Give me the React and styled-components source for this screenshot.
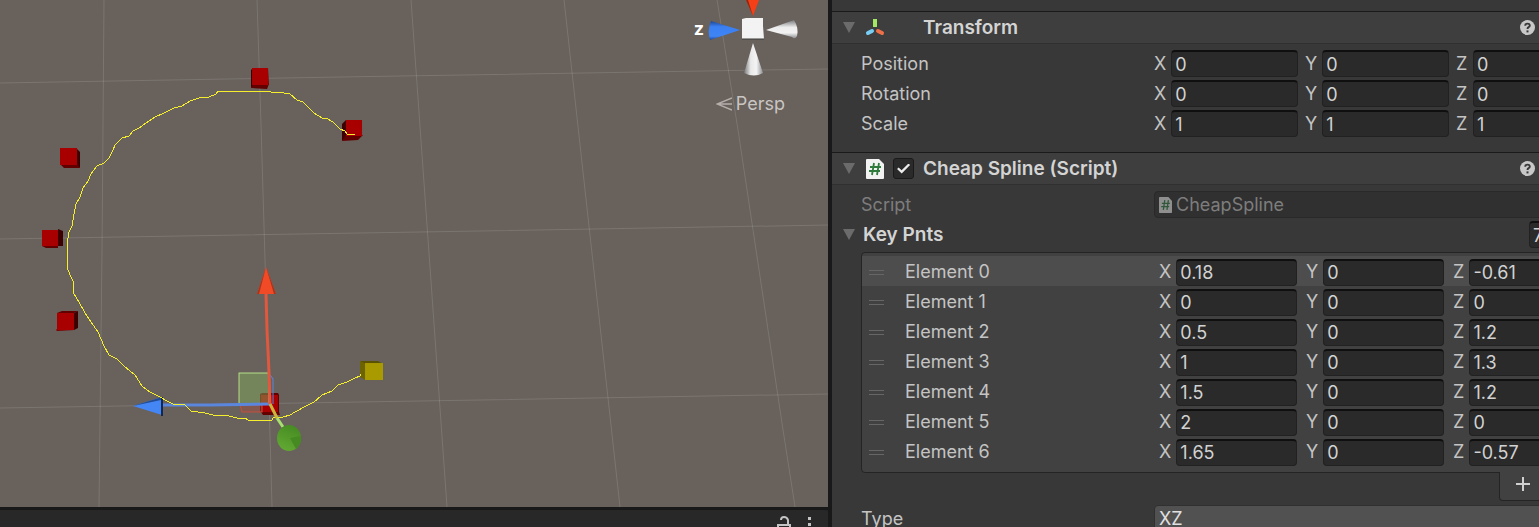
import React from "react";
import styled, { createGlobalStyle } from "styled-components";

const GlobalStyle = createGlobalStyle`
  *, *::before, *::after { box-sizing: border-box; }
  body {
    margin: 0;
    background: #191919;
    color: #c4c4c4;
    font-family: Inter, "Liberation Sans", sans-serif;
    font-size: 18px;
    line-height: 26px;
  }
  button, input, select { font: inherit; color: inherit; }
`;

const Editor = styled.div`
  display: grid;
  grid-template-columns: 54fr 46fr;
  height: 100vh;
  overflow: hidden;
`;

const LeftColumn = styled.div`
  display: flex;
  flex-direction: column;
  min-width: 0;
  min-height: 0;
  border-right: 3px solid #191919;
`;

const SceneView = styled.main`
  position: relative;
  flex: 1;
  min-height: 0;
  overflow: hidden;
  background: #68615c;
`;

const SceneDrawing = styled.svg`
  display: block;
  width: 100%;
  height: 100%;
`;

const Gizmo = styled.div`
  position: absolute;
  top: 0;
  right: 28px;
  width: 108px;
  display: flex;
  flex-direction: column;
  align-items: flex-end;
`;

const GizmoRow = styled.div`
  display: flex;
  align-items: flex-start;
`;

const AxisLabel = styled.span`
  padding-top: 16px;
  margin-right: 4px;
  font-size: 18px;
  font-weight: 700;
  color: #ffffff;
`;

const PerspButton = styled.button`
  display: flex;
  align-items: center;
  gap: 4px;
  margin: 11px 15px 0 0;
  padding: 0;
  border: 0;
  background: none;
  color: #c9c5c3;
`;

const TabStrip = styled.div`
  flex: 0 0 20px;
  display: flex;
  justify-content: flex-end;
  align-items: flex-start;
  gap: 17px;
  padding: 6px 16px 0 0;
  overflow: hidden;
  background: #282828;
  border-top: 3px solid #191919;
  border-top-right-radius: 4px;
`;

const IconButton = styled.button`
  display: flex;
  padding: 0;
  border: 0;
  background: none;
`;

const Inspector = styled.aside`
  min-width: 0;
  overflow: hidden;
  background: #383838;
  border-left: 1px solid #191919;
  padding-top: 11px;
`;

const Header = styled.header`
  display: flex;
  align-items: center;
  height: 33px;
  padding: 0 4px 0 11px;
  background: #3e3e3e;
  border-top: 1px solid #1a1a1a;
  border-bottom: 1px solid #303030;
`;

const IconSlot = styled.span`
  display: flex;
  flex: 0 0 ${(p) => p.$width}px;
`;

const Title = styled.h2`
  flex: 1;
  margin: 0;
  font-size: 19px;
  font-weight: 600;
  color: #d4d4d4;
`;

const CheckBox = styled.input`
  appearance: none;
  width: 21px;
  height: 21px;
  margin: 0 9px 0 0;
  border: 1px solid #1a1a1a;
  border-radius: 3px;
  background: #2a2a2a;
  display: grid;
  place-content: center;
  &:checked::before {
    content: "";
    width: 13px;
    height: 10px;
    background: #ececec;
    clip-path: polygon(0 55%, 12% 40%, 35% 68%, 88% 0, 100% 14%, 36% 100%);
  }
`;

const Body = styled.section`
  display: flex;
  flex-direction: column;
  gap: 3px;
  padding: 6px 0 15px 29px;
`;

const Row = styled.div`
  display: flex;
  align-items: center;
  height: 27px;
`;

const RowLabel = styled.label`
  flex: 0 0 293px;
  color: ${(p) => (p.$dim ? "#7d7d7d" : "#c4c4c4")};
`;

const Vector = styled.div`
  display: grid;
  grid-template-columns: repeat(3, ${(p) => (p.$compact ? 138 : 144)}px);
  gap: ${(p) => (p.$compact ? 9 : 7)}px;
`;

const Axis = styled.label`
  display: flex;
  align-items: center;
  gap: 5px;
`;

const AxisName = styled.span`
  flex: 0 0 ${(p) => (p.$compact ? 10 : 12)}px;
`;

const Field = styled.input`
  flex: 1;
  min-width: 0;
  height: 27px;
  padding: 0 3px;
  border: 1px solid #212121;
  border-top: 2px solid #0f0f0f;
  border-radius: 4px;
  background: #2a2a2a;
  color: #d2d2d2;
  outline: none;
`;

const ObjectField = styled.div`
  flex: 1;
  display: flex;
  align-items: center;
  gap: 4px;
  height: 27px;
  margin-right: -8px;
  padding-left: 4px;
  border: 1px solid #292929;
  border-radius: 4px;
  background: #303030;
  color: #7d7d7d;
`;

const Foldout = styled.button`
  display: flex;
  align-items: center;
  flex: 1;
  gap: 8px;
  margin-left: -18px;
  padding: 0;
  border: 0;
  background: none;
  font-size: 19px;
  font-weight: 600;
  color: #d4d4d4;
`;

const CountField = styled(Field)`
  flex: 0 0 60px;
  margin-right: -50px;
`;

const ElementList = styled.ul`
  margin: 1px -8px 0 0;
  padding: 3px 0 6px;
  list-style: none;
  background: #414141;
  border: 1px solid #242424;
  border-radius: 4px;
`;

const ElementRow = styled.li`
  display: flex;
  align-items: center;
  height: 30px;
  padding: 2px 0 0 7px;
  background: ${(p) => (p.$selected ? "#4d4d4d" : "transparent")};
`;

const Handle = styled.span`
  flex: 0 0 15px;
  height: 5px;
  margin-right: 21px;
  border: solid #666666;
  border-width: 1px 0;
`;

const ElementName = styled.span`
  flex: 0 0 254px;
`;

const ListFooter = styled.div`
  display: flex;
  justify-content: flex-end;
  height: 28px;
  margin: -4px -8px 2px 0;
`;

const AddButton = styled.button`
  display: grid;
  place-items: center;
  width: 48px;
  height: 29px;
  padding: 0 0 5px;
  border: 1px solid #242424;
  border-top: 0;
  border-radius: 0 0 4px 4px;
  background: #414141;
`;

const Select = styled.select`
  appearance: none;
  flex: 1;
  height: 27px;
  margin-right: -8px;
  padding: 0 4px;
  border: 1px solid #303030;
  border-radius: 4px;
  background: #515151;
  color: #e0e0e0;
`;

const Triangle = () => (
  <svg width="12" height="11" viewBox="0 0 12 11" aria-hidden="true">
    <path d="M0 0H12L6 11Z" fill="#6b6b6b" />
  </svg>
);

const TransformIcon = () => (
  <svg width="20" height="20" viewBox="0 0 20 20" fill="none" strokeWidth="4" aria-hidden="true">
    <path d="M10 1V9" stroke="#a3ea62" />
    <path d="M7 13L3 15" stroke="#78cdf5" strokeLinecap="round" />
    <path d="M13 13L17 15" stroke="#ee7048" strokeLinecap="round" />
  </svg>
);

const ScriptIcon = ({ dim }) => (
  <svg width={dim ? 13 : 18} height={dim ? 16 : 20} viewBox="0 0 18 20" preserveAspectRatio="none" aria-hidden="true">
    <path d="M1 0H13L18 5V19Q18 20 17 20H1Q0 20 0 19V1Q0 0 1 0Z" fill={dim ? "#8f8f8f" : "#f2f2f2"} />
    <path d="M8 4L6 16M13 4L11 16M4 8H15M3 12H14" stroke={dim ? "#31583a" : "#2f7a3d"} strokeWidth="1.8" fill="none" />
  </svg>
);

const HelpIcon = () => (
  <svg width="15" height="15" viewBox="0 0 15 15" aria-hidden="true">
    <circle cx="7.5" cy="7.5" r="7.5" fill="#c8c8c8" />
    <path d="M5.2 5.8Q5.2 3.6 7.5 3.6T9.8 5.6Q9.8 6.6 8.6 7.2Q7.5 7.8 7.5 9" fill="none" stroke="#383838" strokeWidth="1.9" />
    <rect x="6.5" y="10.4" width="2" height="2" fill="#383838" />
  </svg>
);

const Cube = ({ x, y, w, h, faces, top = "#a80000" }) => (
  <g>
    {faces.map(([points, fill]) => (
      <polygon key={points} points={points} fill={fill} />
    ))}
    <rect x={x} y={y} width={w} height={h} fill={top} />
  </g>
);

const cubes = [
  { x: 252, y: 68, w: 16, h: 17, faces: [["251,70 253,68 253,86 251,88", "#3c0000"], ["251,88 253,84 269,84 267,89", "#620000"], ["267,68 268,68 269,84 267,86", "#8a0000"]] },
  { x: 346, y: 120, w: 16, h: 16, faces: [["342,124 346,120 346,137 342,141", "#3c0000"], ["342,141 346,135 363,135 358,140", "#620000"]] },
  { x: 60, y: 148, w: 17, h: 17, faces: [["76,148 80,152 80,168 76,165", "#3c0000"], ["60,164 77,164 80,168 64,168", "#620000"]] },
  { x: 42, y: 230, w: 16, h: 16, faces: [["58,229 63,231 63,246 58,246", "#3c0000"], ["42,246 58,246 58,248 46,248", "#620000"]] },
  { x: 57, y: 313, w: 17, h: 17, faces: [["57,313 62,311 78,311 74,313", "#620000"], ["74,313 78,311 78,328 74,330", "#3c0000"], ["56,330 58,328 74,329 74,330 57,331", "#7a0000"]] },
  { x: 261, y: 395, w: 17, h: 17, faces: [["260,394 262,393 278,393 279,395 279,412 280,415 263,415 260,411", "#620000"]] },
  { x: 365, y: 363, w: 18, h: 17, top: "#a99a00", faces: [["360,361 378,361 383,364 365,365", "#5c5300"], ["360,361 366,364 366,380 360,377", "#6d6300"]] },
];

const curve =
  "355,134 347,134 345,131 340,129 333,122 326,118 322,118 314,113 306,105 303,102 297,100 290,94 284,93 271,92 270,91 218,91 216,94 209,97 199,98 190,101 182,106 174,108 164,113 155,117 146,123 139,128 133,131 129,136 122,138 115,145 113,150 109,158 104,163 97,166 91,174 88,181 83,188 80,197 76,204 74,214 72,226 69,232 68,238 67,250 67,267 70,275 73,281 73,292 79,302 85,313 91,322 98,332 104,346 109,355 117,359 124,366 135,375 142,386 150,392 160,397 167,401 173,404 185,405 191,411 205,413 213,415 229,416 237,418 245,418 248,420 272,420 273,418 283,417 290,415 295,412 306,406 314,402 322,395 332,391 338,385 347,382 355,378 360,376 360,374";

function Scene() {
  return (
    <SceneDrawing viewBox="0 0 828 507" preserveAspectRatio="xMinYMin slice" role="img" aria-label="Spline in the scene view">
      <g fill="none" stroke="#ffffff" strokeOpacity="0.13">
        <path d="M104 0L102 250L99 507M257 0L261 125L265 260L272 507M411 0L447 507M564 0L620 507M717 0L738 130L783 430L795 507" />
        <path d="M0 83L400 76L828 69M0 239L420 232L828 225M0 408L420 401L828 394" />
      </g>
      {cubes.map((c) => (
        <Cube key={`${c.x}-${c.y}`} {...c} />
      ))}
      <rect x="239" y="373" width="30" height="31" fill="#7fa85a" fillOpacity="0.5" stroke="#b4e088" />
      <path d="M240 405L242 412H262V405Z" fill="#b04a3c" fillOpacity="0.4" stroke="#c2513f" />
      <path d="M270 375L273 379V404" fill="none" stroke="#5b86dc" />
      <path d="M162 405L210 405L270 404" fill="none" stroke="#5a86de" strokeWidth="3" />
      <path d="M266 294L267 330L269 372L270 404" fill="none" stroke="#e0583e" strokeWidth="3" />
      <path d="M266 267L257 294H276Z" fill="#f04a26" />
      <path d="M266 267L257 294H259Z" fill="#a5351d" />
      <path d="M266 267L274 294H276Z" fill="#a5351d" />
      <path d="M133 406L162 397V415Z" fill="#4486f4" />
      <path d="M133 406L162 397L161 400Z" fill="#234b91" />
      <path d="M161 397H163V416H161Z" fill="#14284f" />
      <polyline points={curve} fill="none" stroke="#f4ee2c" shapeRendering="crispEdges" />
      <path d="M270 404L277 418" stroke="#cdb43a" strokeWidth="3" />
      <path d="M277 418L283 427" stroke="#a8e070" strokeWidth="3" />
      <defs>
        <linearGradient id="coneGreen" x1="0.7" y1="0" x2="0.3" y2="1">
          <stop offset="0" stopColor="#468a22" />
          <stop offset="1" stopColor="#62aa33" />
        </linearGradient>
      </defs>
      <ellipse cx="289" cy="438" rx="12" ry="13" fill="url(#coneGreen)" />
      <path d="M296 449Q302 444 301 436L290 438Z" fill="#468a22" />
    </SceneDrawing>
  );
}

const transformRows = [
  { name: "Position", values: ["0", "0", "0"] },
  { name: "Rotation", values: ["0", "0", "0"] },
  { name: "Scale", values: ["1", "1", "1"] },
];

const keyPoints = [
  ["0.18", "0", "-0.61"],
  ["0", "0", "0"],
  ["0.5", "0", "1.2"],
  ["1", "0", "1.3"],
  ["1.5", "0", "1.2"],
  ["2", "0", "0"],
  ["1.65", "0", "-0.57"],
];

function VectorField({ name, values, compact }) {
  return (
    <Vector role="group" aria-label={name} $compact={compact}>
      {["X", "Y", "Z"].map((axis, i) => (
        <Axis key={axis}>
          <AxisName $compact={compact}>{axis}</AxisName>
          <Field type="text" defaultValue={values[i]} />
        </Axis>
      ))}
    </Vector>
  );
}

export default function App() {
  return (
    <>
      <GlobalStyle />
      <Editor>
        <LeftColumn>
          <SceneView>
            <Scene />
            <Gizmo>
              <GizmoRow>
                <AxisLabel>z</AxisLabel>
                <svg width="92" height="80" viewBox="0 0 92 80" aria-hidden="true">
                  <defs>
                    <linearGradient id="coneDown">
                      <stop offset="0" stopColor="#77787a" />
                      <stop offset="0.35" stopColor="#e8e8e8" />
                      <stop offset="0.65" stopColor="#f4f4f4" />
                      <stop offset="1" stopColor="#8d8f92" />
                    </linearGradient>
                    <linearGradient id="coneSide" x2="0" y2="1">
                      <stop offset="0" stopColor="#77787a" />
                      <stop offset="0.4" stopColor="#ededed" />
                      <stop offset="0.7" stopColor="#f2f2f2" />
                      <stop offset="1" stopColor="#8d8f92" />
                    </linearGradient>
                    <linearGradient id="coneBlue" x2="0" y2="1">
                      <stop offset="0" stopColor="#1d4695" />
                      <stop offset="0.3" stopColor="#3b80f2" />
                      <stop offset="0.8" stopColor="#3f84f5" />
                      <stop offset="1" stopColor="#1d4695" />
                    </linearGradient>
                  </defs>
                  <path d="M38 0H51L45 16Z" fill="#f53f16" />
                  <path d="M38 0H40L45 16Z" fill="#8c2812" />
                  <path d="M32 30L3 21Q-1 30 2 40Z" fill="url(#coneBlue)" />
                  <path d="M34 19L38 18H55V26L56 39H34Z" fill="#f3f3f3" />
                  <path d="M34 39H56" stroke="#3a3a3a" />
                  <path d="M58 30L86 20Q91 28 89 36Q87 40 84 37Z" fill="url(#coneSide)" />
                  <path d="M45 43L55 73Q46 78 36 73Z" fill="url(#coneDown)" />
                </svg>
              </GizmoRow>
              <PerspButton type="button">
                <svg width="16" height="14" viewBox="0 0 16 14" fill="none" stroke="#b5aeab" strokeWidth="1.4" aria-hidden="true">
                  <path d="M16 1L1 7L16 13M1 7H16" />
                </svg>
                Persp
              </PerspButton>
            </Gizmo>
          </SceneView>
          <TabStrip>
            <IconButton type="button" aria-label="Lock">
              <svg width="14" height="18" viewBox="0 0 14 18" fill="none" stroke="#c4c4c4" strokeWidth="2" aria-hidden="true">
                <path d="M4 4Q4 1 7 1T11 4V9M1 17V9H13V17Z" />
              </svg>
            </IconButton>
            <IconButton type="button" aria-label="More">
              <svg width="4" height="18" viewBox="0 0 4 18" fill="#c4c4c4" aria-hidden="true">
                <rect y="1" width="3" height="3" />
                <rect y="7" width="3" height="3" />
                <rect y="13" width="3" height="3" />
              </svg>
            </IconButton>
          </TabStrip>
        </LeftColumn>

        <Inspector>
          <Header>
            <IconSlot $width={22}><Triangle /></IconSlot>
            <IconSlot $width={58}><TransformIcon /></IconSlot>
            <Title>Transform</Title>
            <IconButton type="button" aria-label="Transform help"><HelpIcon /></IconButton>
          </Header>
          <Body>
            {transformRows.map((row) => (
              <Row key={row.name}>
                <RowLabel as="span">{row.name}</RowLabel>
                <VectorField name={row.name} values={row.values} />
              </Row>
            ))}
          </Body>

          <Header>
            <IconSlot $width={23}><Triangle /></IconSlot>
            <IconSlot $width={27}><ScriptIcon /></IconSlot>
            <CheckBox type="checkbox" defaultChecked aria-label="Enable Cheap Spline" />
            <Title>Cheap Spline (Script)</Title>
            <IconButton type="button" aria-label="Cheap Spline help"><HelpIcon /></IconButton>
          </Header>
          <Body>
            <Row>
              <RowLabel as="span" $dim>Script</RowLabel>
              <ObjectField>
                <ScriptIcon dim />
                CheapSpline
              </ObjectField>
            </Row>
            <Row>
              <Foldout type="button" aria-expanded="true">
                <Triangle />
                Key Pnts
              </Foldout>
              <CountField type="text" defaultValue="7" aria-label="Key Pnts size" />
            </Row>
            <ElementList>
              {keyPoints.map((values, i) => (
                <ElementRow key={i} $selected={i === 0}>
                  <Handle />
                  <ElementName>Element {i}</ElementName>
                  <VectorField name={`Element ${i}`} values={values} compact />
                </ElementRow>
              ))}
            </ElementList>
            <ListFooter>
              <AddButton type="button" aria-label="Add element">
                <svg width="14" height="14" viewBox="0 0 14 14" stroke="#d0d0d0" strokeWidth="2" aria-hidden="true">
                  <path d="M7 0V14M0 7H14" />
                </svg>
              </AddButton>
            </ListFooter>
            <Row>
              <RowLabel htmlFor="spline-type">Type</RowLabel>
              <Select id="spline-type" defaultValue="XZ">
                <option>XZ</option>
              </Select>
            </Row>
          </Body>
        </Inspector>
      </Editor>
    </>
  );
}
